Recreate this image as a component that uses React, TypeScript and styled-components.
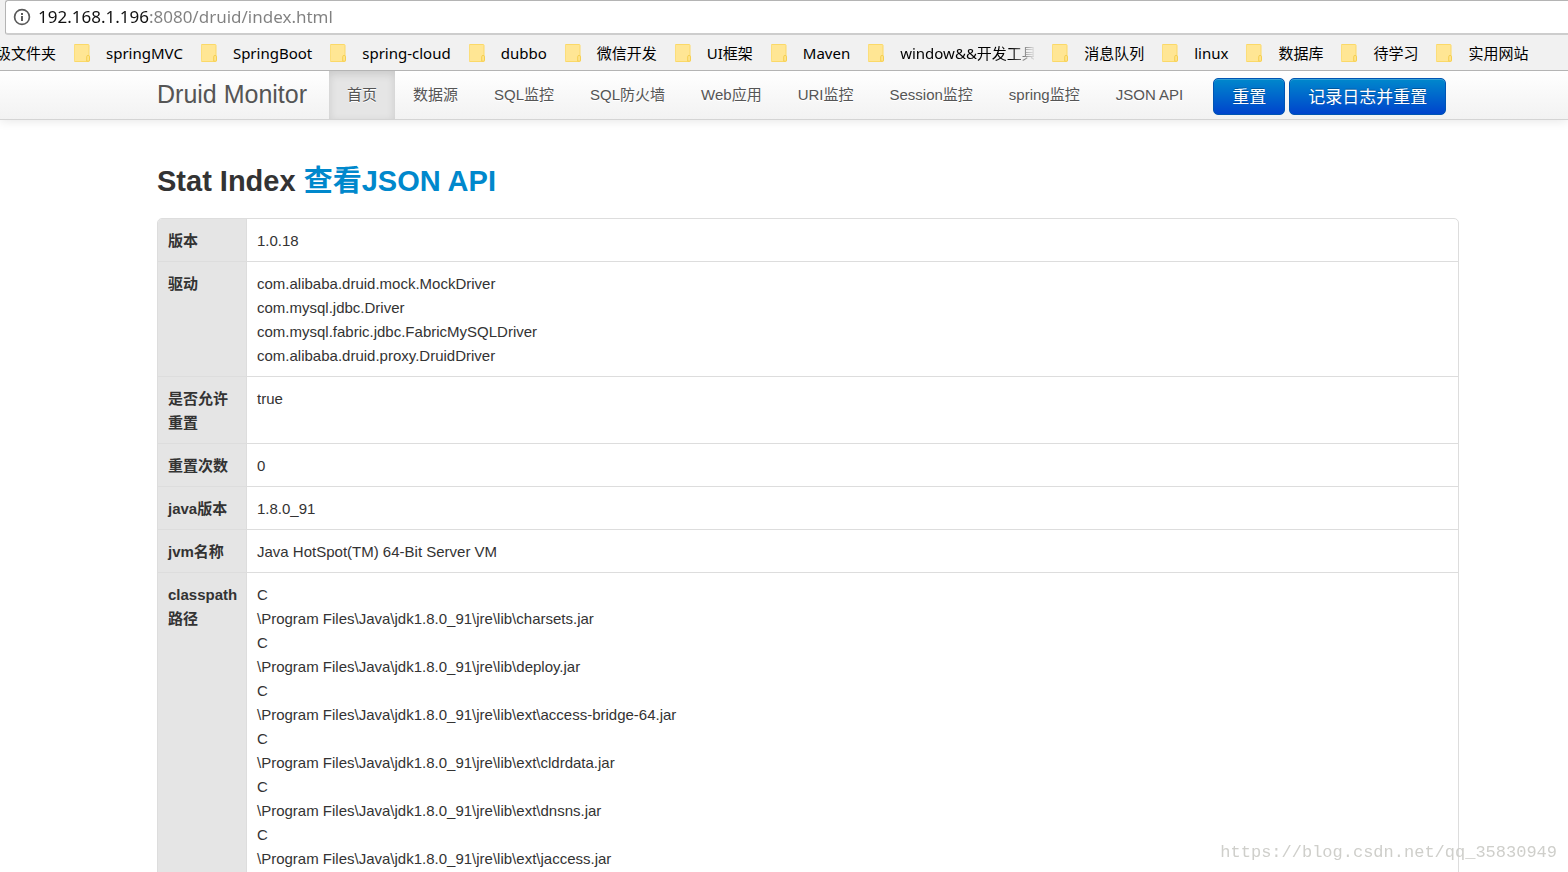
import React from "react";
import styled, { createGlobalStyle } from "styled-components";

const GlobalStyle = createGlobalStyle`
  * { box-sizing: border-box; }
  body {
    margin: 0;
    background: #fff;
    color: #333;
    font: 15px/24px "Liberation Sans", "Noto Sans CJK SC", sans-serif;
  }
`;

const Shell = styled.div`
  display: flex;
  flex-direction: column;
  height: 100vh;
  overflow: hidden;
`;

const Chrome = styled.header`
  flex: none;
  background: #f1f1f1;
  border-bottom: 1px solid #b4b4b4;
  font-family: "Noto Sans", "Noto Sans CJK SC", sans-serif;
`;

const AddressBar = styled.label`
  display: flex;
  align-items: center;
  gap: 7px;
  height: 35px;
  margin-left: 5px;
  padding-left: 7px;
  background: #fff;
  border: 1px solid #b4b4b4;
  border-right: 0;
  border-bottom: 2px solid #cdcdcd;
  border-radius: 3px 0 0 3px;
`;

const AddressInput = styled.input`
  flex: 1;
  min-width: 0;
  height: 28px;
  padding: 0;
  border: 0;
  outline: 0;
  font: 17px/28px "Noto Sans", sans-serif;
  color: #808080;
  background: linear-gradient(to right, #111 112px, #808080 112px);
  background-clip: text;
  -webkit-text-fill-color: transparent;
`;

const Bookmarks = styled.nav`
  display: flex;
  align-items: center;
  gap: 18px;
  height: 35px;
  overflow: hidden;
`;

const Bookmark = styled.a`
  flex: none;
  display: flex;
  align-items: center;
  gap: 16px;
  color: #000;
  font-size: 15px;
  line-height: 24px;
  white-space: nowrap;
  text-decoration: none;
`;

const CutBookmark = styled(Bookmark)`
  justify-content: flex-end;
  width: 56px;
  overflow: hidden;
`;

const BookmarkLabel = styled.span<{ $faded?: boolean }>`
  ${(p) =>
    p.$faded &&
    `max-width: 134px;
     overflow: hidden;
     mask-image: linear-gradient(to right, #000 110px, transparent 136px);`}
`;

const Content = styled.div`
  flex: 1;
  min-height: 0;
  overflow-y: auto;
  scrollbar-width: none;
`;

const Navbar = styled.nav`
  display: flex;
  align-items: stretch;
  height: 49px;
  padding: 0 109px 0 157px;
  background: linear-gradient(#fff, #f2f2f2);
  border-bottom: 1px solid #d4d4d4;
  box-shadow: 0 1px 10px rgba(0, 0, 0, 0.1);
`;

const Brand = styled.a`
  width: 172px;
  color: #555;
  font-size: 25px;
  line-height: 47px;
  white-space: nowrap;
  text-decoration: none;
`;

const Tab = styled.a<{ $active?: boolean }>`
  padding: 0 18px;
  color: #555;
  line-height: 47px;
  white-space: nowrap;
  text-decoration: none;
  text-shadow: 0 1px 0 #fff;
  ${(p) =>
    p.$active &&
    `background: #e5e5e5;
     box-shadow: inset 0 3px 8px rgba(0, 0, 0, 0.125);`}
`;

const Actions = styled.div`
  display: flex;
  gap: 4px;
  padding: 7px 0 0 12px;
`;

const ActionButton = styled.button`
  height: 37px;
  padding: 2px 18px 0;
  border: 1px solid #0055b3;
  border-radius: 5px;
  background: linear-gradient(#0088cc, #0044cc);
  box-shadow: inset 0 1px 0 rgba(255, 255, 255, 0.2);
  color: #fff;
  font: 17px/24px "Liberation Sans", "Noto Sans CJK SC", sans-serif;
  text-shadow: 0 -1px 0 rgba(0, 0, 0, 0.25);
  white-space: nowrap;
`;

const Main = styled.main`
  padding: 37px 109px 24px 157px;
`;

const Title = styled.h1`
  margin: 0 0 12px;
  font-size: 29px;
  line-height: 49px;
`;

const TitleLink = styled.a`
  color: #0088cc;
  text-decoration: none;
`;

const StatTable = styled.table`
  width: 100%;
  border: 1px solid #ddd;
  border-radius: 5px;
  border-collapse: separate;
  border-spacing: 0;
  overflow: hidden;

  tr + tr > * {
    border-top: 1px solid #ddd;
  }
`;

const StatName = styled.th`
  width: 88px;
  padding: 10px 8px 8px 10px;
  background: #e5e5e5;
  text-align: left;
  vertical-align: top;
`;

const StatValue = styled.td`
  padding: 10px 8px 8px 10px;
  border-left: 1px solid #ddd;
  vertical-align: top;
`;

const Watermark = styled.div`
  position: fixed;
  right: 11px;
  bottom: 7px;
  color: #cfcfcb;
  font: 17px/24px "Liberation Mono", monospace;
  pointer-events: none;
`;

const InfoIcon = () => (
  <svg width="18" height="18" viewBox="0 0 18 18" aria-hidden="true">
    <circle cx="9" cy="9" r="7.4" fill="none" stroke="#5a5a5a" strokeWidth="1.7" />
    <path d="M8 8h2v5H8zM8 5h2v2H8z" fill="#5a5a5a" />
  </svg>
);

const FolderIcon = () => (
  <svg width="16" height="18" viewBox="0 0 16 18" aria-hidden="true">
    <path
      d="M1 .5h13.2q.8 0 .8.8v10.2q.6.3.6 1.2v3.6q0 1.2-1.2 1.2H1q-.8 0-.8-.8V1.3Q.2.5 1 .5z"
      fill="#ffe694"
      stroke="#fbd968"
    />
    <path d="M12.7 17.2v-4.4q0-1.4 1.3-1.4 1.5 0 1.5 1.4v3.4q0 1-1 1z" fill="#ffe48a" stroke="#f5cf52" />
  </svg>
);

const bookmarks = [
  "springMVC",
  "SpringBoot",
  "spring-cloud",
  "dubbo",
  "微信开发",
  "UI框架",
  "Maven",
  "window&&开发工具",
  "消息队列",
  "linux",
  "数据库",
  "待学习",
  "实用网站",
];

const tabs = [
  "首页",
  "数据源",
  "SQL监控",
  "SQL防火墙",
  "Web应用",
  "URI监控",
  "Session监控",
  "spring监控",
  "JSON API",
];

const jre = "\\Program Files\\Java\\jdk1.8.0_91\\jre\\lib\\";

const stats: { name: string; lines: string[] }[] = [
  { name: "版本", lines: ["1.0.18"] },
  {
    name: "驱动",
    lines: [
      "com.alibaba.druid.mock.MockDriver",
      "com.mysql.jdbc.Driver",
      "com.mysql.fabric.jdbc.FabricMySQLDriver",
      "com.alibaba.druid.proxy.DruidDriver",
    ],
  },
  { name: "是否允许重置", lines: ["true"] },
  { name: "重置次数", lines: ["0"] },
  { name: "java版本", lines: ["1.8.0_91"] },
  { name: "jvm名称", lines: ["Java HotSpot(TM) 64-Bit Server VM"] },
  {
    name: "classpath路径",
    lines: [
      "charsets.jar",
      "deploy.jar",
      "ext\\access-bridge-64.jar",
      "ext\\cldrdata.jar",
      "ext\\dnsns.jar",
      "ext\\jaccess.jar",
    ].flatMap((jar) => ["C", jre + jar]),
  },
];

export default function App() {
  return (
    <Shell>
      <GlobalStyle />
      <Chrome>
        <AddressBar>
          <InfoIcon />
          <AddressInput aria-label="Address" defaultValue="192.168.1.196:8080/druid/index.html" />
        </AddressBar>
        <Bookmarks>
          <CutBookmark href="#">
            <BookmarkLabel>圾文件夹</BookmarkLabel>
          </CutBookmark>
          {bookmarks.map((name) => (
            <Bookmark key={name} href="#">
              <FolderIcon />
              <BookmarkLabel $faded={name.startsWith("window")}>{name}</BookmarkLabel>
            </Bookmark>
          ))}
        </Bookmarks>
      </Chrome>
      <Content>
        <Navbar>
          <Brand href="#">Druid Monitor</Brand>
          {tabs.map((name, i) => (
            <Tab key={name} href="#" $active={i === 0}>
              {name}
            </Tab>
          ))}
          <Actions>
            <ActionButton type="button">重置</ActionButton>
            <ActionButton type="button">记录日志并重置</ActionButton>
          </Actions>
        </Navbar>
        <Main>
          <Title>
            Stat Index <TitleLink href="#">查看JSON API</TitleLink>
          </Title>
          <StatTable>
            <tbody>
              {stats.map((stat) => (
                <tr key={stat.name}>
                  <StatName scope="row">{stat.name}</StatName>
                  <StatValue>
                    {stat.lines.map((line, i) => (
                      <div key={i}>{line}</div>
                    ))}
                  </StatValue>
                </tr>
              ))}
            </tbody>
          </StatTable>
        </Main>
      </Content>
      <Watermark>https://blog.csdn.net/qq_35830949</Watermark>
    </Shell>
  );
}
